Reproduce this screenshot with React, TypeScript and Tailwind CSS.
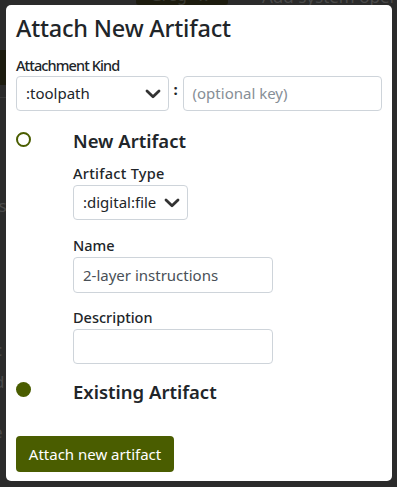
import React from "react";

function Chevron({ className = "" }: { className?: string }) {
  return (
    <svg className={className} width="16" height="10" viewBox="0 0 16 10" fill="none">
      <path d="M2 2 L8 7.8 L14 2" stroke="#333" strokeWidth="2.8" strokeLinecap="round" strokeLinejoin="round" />
    </svg>
  );
}

export default function App() {
  return (
    <div
      className="relative w-[397px] h-[487px] overflow-hidden bg-[#2b2b2b] pt-[5px] pl-[6px]"
      style={{ fontFamily: '"Noto Sans", "Open Sans", sans-serif' }}
    >
      {/* faint background content peeking around the modal */}
      <div className="absolute left-[136px] top-[-14px] w-[92px] h-[19px] bg-[#1d1c0f] rounded-[3px] text-[#3a3a32] text-[16px] leading-[19px] pl-[14px]">Greg&nbsp;&nbsp;&nbsp;x</div>
      <div className="absolute left-[262px] top-[-13px] text-[#4a4a4a] text-[17px] leading-[19px] whitespace-nowrap">Add system operat</div>
      <div className="absolute left-[0px] top-[50px] w-[6px] h-[35px] bg-[#1d1c0f]" />
      <div className="absolute left-[0px] top-[97px] w-[6px] h-[1px] bg-[#3a3a3a]" />
      <div className="absolute left-[-6px] top-[196px] text-[#4a4a4a] text-[17px] leading-[20px]">ls</div>
      <div className="absolute left-[-6px] top-[340px] text-[#4a4a4a] text-[17px] leading-[20px]">c</div>
      <div className="absolute left-[-6px] top-[372px] text-[#4a4a4a] text-[17px] leading-[20px]">d</div>
      <div className="absolute left-[-7px] top-[422px] text-[#4a4a4a] text-[17px] leading-[20px]">e</div>

      <div className="relative w-[386px] h-[476px] bg-white rounded-[5px] pt-[7px] px-[10px] text-[#212529]">
        <h2 className="text-[23.5px] leading-[32px] font-medium tracking-[-0.2px] whitespace-nowrap">Attach New Artifact</h2>

        <div className="mt-[11px] text-[14.5px] leading-[20px] font-medium tracking-[-0.9px] whitespace-nowrap">Attachment Kind</div>
        <div className="mt-[1px] flex items-start">
          <div className="w-[153px] h-[35px] border border-[#ced4da] rounded-[4px] flex items-center justify-between pl-[9px] pr-[7px] text-[15px] text-[#212529]">
            <span>:toolpath</span>
            <Chevron />
          </div>
          <div className="w-[14px] flex justify-center pt-[6px] font-bold text-[15px] leading-[15px]">:</div>
          <div className="w-[200px] h-[35px] border border-[#ced4da] rounded-[4px] flex items-center pl-[9px] text-[15px] text-[#868e96]">
            (optional key)
          </div>
        </div>

        <div className="mt-[17px] flex items-start">
          <div className="w-[57px] pt-[4px]">
            <div className="w-[15px] h-[15px] rounded-full border-[2.5px] border-[#4a5d00]" />
          </div>
          <div className="flex flex-col">
            <div className="text-[18.5px] leading-[26px] font-semibold">New Artifact</div>
            <div className="mt-[9px] text-[14.5px] leading-[20px] font-medium tracking-[0.3px]">Artifact Type</div>
            <div className="mt-[2px] w-[115px] h-[35px] border border-[#ced4da] rounded-[4px] flex items-center justify-between pl-[9px] pr-[7px] text-[15px]">
              <span>:digital:file</span>
              <Chevron />
            </div>
            <div className="mt-[15px] text-[14.5px] leading-[20px] font-medium">Name</div>
            <div className="mt-[2px] w-[200px] h-[36px] border border-[#ced4da] rounded-[4px] flex items-center pl-[9px] text-[15px] text-[#495057]">
              2-layer instructions
            </div>
            <div className="mt-[14px] text-[14.5px] leading-[20px] font-medium">Description</div>
            <div className="mt-[2px] w-[200px] h-[35px] border border-[#ced4da] rounded-[4px]" />
          </div>
        </div>

        <div className="mt-[15px] flex items-start">
          <div className="w-[57px] pt-[3px]">
            <div className="w-[15px] h-[15px] rounded-full bg-[#4a5d00]" />
          </div>
          <div className="text-[18.5px] leading-[26px] font-semibold">Existing Artifact</div>
        </div>

        <button className="mt-[31px] w-[158px] h-[36px] rounded-[4px] bg-[#4a5d00] text-white text-[15px] flex items-center justify-center">
          Attach new artifact
        </button>
      </div>
    </div>
  );
}
